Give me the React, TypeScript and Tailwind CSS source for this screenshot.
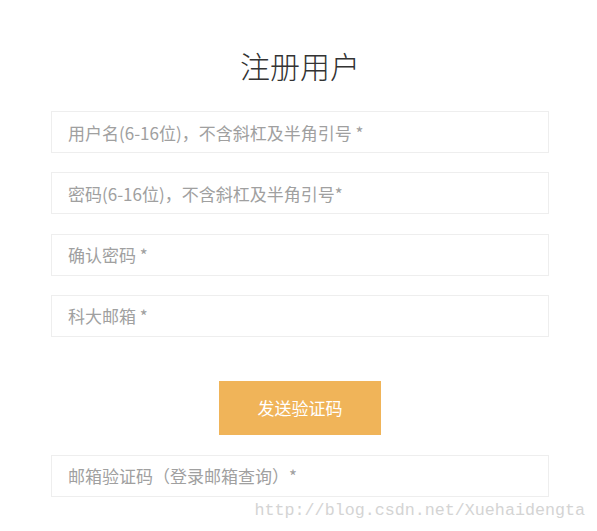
export default function App() {
  const fields = [
    "用户名(6-16位)，不含斜杠及半角引号 *",
    "密码(6-16位)，不含斜杠及半角引号*",
    "确认密码 *",
    "科大邮箱 *",
  ];

  return (
    <div className="relative min-h-[531px] w-full bg-white font-['Noto_Sans_CJK_SC','Noto_Sans',sans-serif]">
      <div className="pl-[51px] pr-[48px] pt-[43px] pb-[35px]">
        <h1 className="text-center text-[30px] leading-[45px] text-[#333333] font-light">
          注册用户
        </h1>

        <form className="mt-[23px] flex flex-col">
          <div className="flex flex-col gap-[19.3px]">
            {fields.map((f) => (
              <input
                key={f}
                type="text"
                placeholder={f}
                className="h-[42px] w-full border border-[#eeeeee] bg-white px-[16px] text-[17px] text-[#555] outline-none placeholder:text-[#a0a0a0]"
              />
            ))}
          </div>

          <div className="mt-[44px] flex justify-center">
            <button
              type="button"
              className="h-[54px] w-[162px] bg-[#f0b459] text-[17px] text-white"
            >
              发送验证码
            </button>
          </div>

          <input
            type="text"
            placeholder="邮箱验证码（登录邮箱查询）*"
            className="mt-[20px] h-[42px] w-full border border-[#eeeeee] bg-white px-[16px] text-[17px] text-[#555] outline-none placeholder:text-[#a0a0a0]"
          />
        </form>
      </div>

      {/* watermark */}
      <div className="absolute right-[12px] top-[499px] font-['Liberation_Mono',monospace] text-[16.7px] leading-[24px] text-[#d4d4d4]">
        http://blog.csdn.net/Xuehaidengta
      </div>
    </div>
  );
}
